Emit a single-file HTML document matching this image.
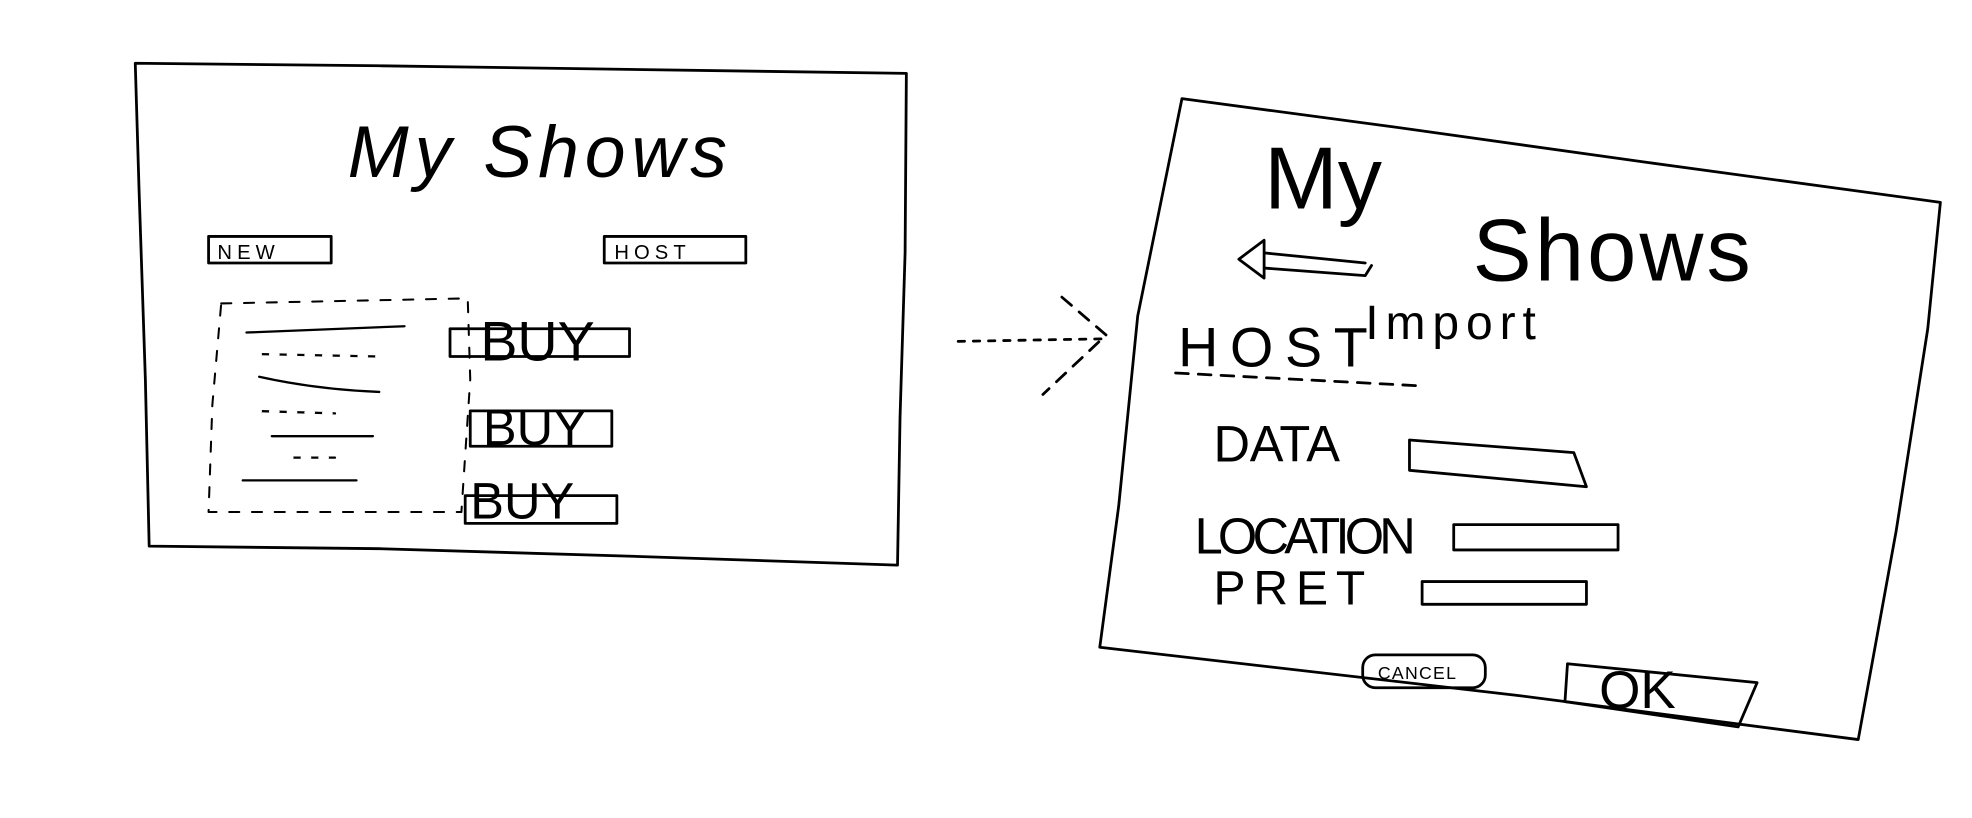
<!DOCTYPE html>
<html><head><meta charset="utf-8"><style>
html,body{margin:0;padding:0;background:#fff;width:1972px;height:818px;overflow:hidden}
svg{display:block}
text{font-family:"Liberation Sans",sans-serif;fill:#000}
</style></head><body>
<svg width="1972" height="818" viewBox="0 0 1560 647" xmlns="http://www.w3.org/2000/svg" fill="none" stroke="#000" stroke-width="2.2" stroke-linecap="round" stroke-linejoin="round">
<!-- left frame -->
<path d="M107,50 L300,52 L717,58 L716,200 L712,330 L710,447 L500,440 L300,434 L118,432 L115,300 L110,150 Z"/>
<text x="275" y="140" font-size="58" stroke="none" font-style="italic" textLength="300">My Shows</text>
<rect x="165" y="187" width="97" height="21"/>
<text x="172" y="205" font-size="16" stroke="none" letter-spacing="4">NEW</text>
<rect x="478" y="187" width="112" height="21"/>
<text x="486" y="205" font-size="16" stroke="none" letter-spacing="4">HOST</text>
<path d="M175,240 L370,236 L372,300 L365,405 L165,405 L168,320 Z" stroke-dasharray="8 10" stroke-width="1.6"/>
<path d="M195,263 L320,258 M200,280 L300,282 M205,298 Q250,308 300,310 M200,325 L265,327 M215,345 L295,345 M225,362 L265,362 M192,380 L282,380" stroke-width="1.8"/>
<path d="M200,280 L300,282 M200,325 L265,327 M225,362 L265,362" stroke-dasharray="6 8" stroke="#fff" stroke-width="2.5"/>
<rect x="356" y="260" width="142" height="22"/><text x="380" y="285" font-size="44" stroke="none">BUY</text>
<rect x="372" y="325" width="112" height="28"/><text x="382" y="352" font-size="40" stroke="none">BUY</text>
<rect x="368" y="392" width="120" height="22"/><text x="372" y="410" font-size="40" stroke="none">BUY</text>
<!-- arrow -->
<path d="M758,270 L872,268" stroke-dasharray="5 7"/>
<path d="M840,235 L875,265 L825,312" stroke-dasharray="10 8"/>
<!-- right frame -->
<path d="M935,78 L1100,100 L1300,128 L1535,160 L1525,260 L1500,420 L1470,585 L1200,550 L870,512 L885,400 L900,250 Z"/>
<text x="1000" y="165" font-size="70" stroke="none">My</text>
<text x="1165" y="222" font-size="70" stroke="none" textLength="220">Shows</text>
<path d="M980,205 L1000,190 L1000,220 Z M1000,200 L1080,208 M1000,212 L1080,218 L1085,210"/>
<text x="1080" y="268" font-size="38" stroke="none" textLength="135">Import</text>
<text x="932" y="290" font-size="44" stroke="none" textLength="150">HOST</text>
<path d="M930,295 L1120,305" stroke-dasharray="10 8"/>
<text x="960" y="365" font-size="40" stroke="none" textLength="100">DATA</text>
<path d="M1115,348 L1245,358 L1255,385 L1115,372 Z"/>
<text x="945" y="438" font-size="40" stroke="none" textLength="175">LOCATION</text>
<rect x="1150" y="415" width="130" height="20"/>
<text x="960" y="478" font-size="38" stroke="none" textLength="120">PRET</text>
<rect x="1125" y="460" width="130" height="18"/>
<rect x="1078" y="518" width="97" height="26" rx="10"/>
<text x="1090" y="537" font-size="14" stroke="none" letter-spacing="1">CANCEL</text>
<path d="M1240,525 L1390,540 L1375,575 L1238,555 Z"/>
<text x="1265" y="560" font-size="42" stroke="none">OK</text>
</svg>
</body></html>
